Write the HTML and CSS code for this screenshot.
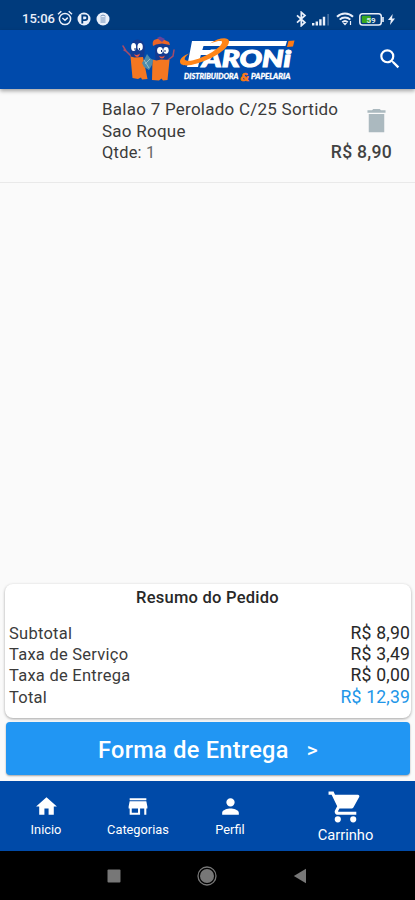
FILE: index.html
```html
<!DOCTYPE html>
<html lang="pt-BR">
<head>
<meta charset="utf-8">
<meta name="viewport" content="width=device-width, initial-scale=1">
<title>Faroni - Carrinho</title>
<link rel="stylesheet" href="styles.css">
</head>
<body>
<div class="app">
  <div class="status">
    <span class="clock">15:06</span>
    <svg class="alarm" width="16" height="16" viewBox="0 0 16 16" fill="none" stroke="currentColor" stroke-width="1.5"><circle cx="8" cy="9" r="5.6"/><path d="M1 4.2 4.3 1.3M15 4.2 11.7 1.3M5.4 8 8 10.2 10.8 7.6"/></svg>
    <svg class="badge-p" width="14" height="14" viewBox="0 0 14 14"><circle cx="7" cy="7" r="6.5" fill="currentColor"/><path d="M5.3 11.5V3.5H8a2.2 2.2 0 0 1 0 4.6H5.3" fill="none" stroke="#003b7d" stroke-width="1.8"/></svg>
    <svg class="badge-s" width="14" height="14" viewBox="0 0 14 14"><circle cx="7" cy="7" r="6.5" fill="currentColor"/><path d="M4.5 4.2 7 3l2.5 1.2M4.5 6h5M4.5 8h5M4.5 10h5" fill="none" stroke="#7291b8" stroke-width="1"/></svg>
    <span class="grow"></span>
    <svg width="11" height="16" viewBox="0 0 11 16" fill="none" stroke="currentColor" stroke-width="1.7"><path d="M1 4.3 9 11.5 5.3 14.7V1.3L9 4.5 1 11.7"/></svg>
    <svg class="signal" width="18" height="13" viewBox="0 0 18 13" fill="currentColor"><path d="M0 10h2.4v2.5H0zM3.6 8.500H6v4H3.600zM7.200 6.300h2.400v6.200H7.200zM10.800 3.800h2.400v8.700h-2.400z"/><path d="M15.400 1h1.400v11.500h-1.400z" opacity=".35"/></svg>
    <svg class="wifi" width="18" height="14" viewBox="0 0 18 14" fill="none" stroke="currentColor" stroke-width="2"><path d="M1 4.800a11.500 11.500 0 0 1 16 0M3.700 7.600a7.600 7.600 0 0 1 10.600 0M6.300 10.200a4 4 0 0 1 5.400 0"/><path d="m6.800 11 2.200 2.400L11.200 11z" fill="currentColor" stroke="none"/><path d="M14.500 9v4" stroke-width="1.200"/></svg>
    <svg class="battery" width="25" height="13" viewBox="0 0 25 13"><rect x=".8" y=".8" width="21.500" height="11.200" rx="2.800" fill="none" stroke="currentColor" stroke-width="1.500"/><rect x="2.800" y="2.800" width="9" height="7.300" rx="1" fill="#38a920"/><path d="M23.200 4h1.600v5h-1.600z" fill="currentColor"/><text class="level" x="7.500" y="9.500">59</text></svg>
    <svg class="bolt" width="7" height="11" viewBox="0 0 7 11" fill="currentColor"><path d="M4.700 0 0 6h2.800L2 11l5-6.500H4z"/></svg>
  </div>

  <header class="header">
    <svg class="logo" width="176" height="50" viewBox="121 35 176 50">
      <g fill="none" stroke="#a54c68" stroke-width="1.500" stroke-linecap="round"><path d="M132 57 126 51 123 46M126 51l-2-1M168 60l5-4 1-6"/></g>
      <path d="M130.500 48q1-8 6.500-8.500t8 7l-1 11-4 3h-9z" fill="#143b91"/>
      <path d="M155 48q1-8 7-8t7.500 7l-1 11-4 3h-9z" fill="#143b91"/>
      <path d="m130.500 56.500 4 1 8.500-.5 4.500 22-5.500.5-1-2-3 1.500-5.500-1z" fill="#f47721"/>
      <path d="m152.500 59.500 4 1 4.500-1 8.500.5-2 20-4.500.5-1.500-2-2.500 2-7-.5z" fill="#f47721"/>
      <g fill="#fff"><ellipse cx="133.600" cy="47" rx="2.500" ry="4"/><ellipse cx="140.100" cy="46.700" rx="2.700" ry="3.800"/><ellipse cx="160" cy="50.500" rx="2.900" ry="3.600"/><ellipse cx="166" cy="50.300" rx="2.700" ry="3.400"/></g>
      <path d="M135 48v2M139.400 48v2M161.500 50v2M165 50v2" stroke="#142f70"/>
      <path d="M134 54q3 2 6-.5-1 3.500-3 3.500t-3-3M159 56q4 1.500 6-.5-1 3-3 3t-3-2.500" fill="#e95645"/>
      <path d="M153 46q-1-4 1-6l6-2 9 4 1 3-8-1.500-6 1z" fill="#ed6425"/>
      <path d="m157 38 3-1.500 5 2.500-3 3z" fill="#67449a"/>
      <path d="m144 60 3-6 3 4 3 2-1 5-3 5-5-3-2-4z" fill="#4d8cad"/>
      <path d="m144 60 5 8M150 59l-5 5" stroke="#9bbdc5"/>
      <path d="M192 41h95l-1.500 5h-82l-1.200 4h10l-1.500 5h-10L198 67H187z" fill="#fff"/>
      <text class="brand" x="202" y="67" textLength="89" lengthAdjust="spacingAndGlyphs">ARONi</text>
      <path d="m293.500 41 6-.5-1.500 6-6 .5z" transform="translate(-5)" fill="#ff7a13"/>
      <path d="M210 43.500c8-5.500 18-7 19-2.500 1 7-16 18-32 22.500-10 3-17 2.500-17-2 0-3 4-6.500 9-8-5 4-6 7-1 7.300 10 .7 35-13 34-19-.5-2.500-6-.5-12 1.700z" fill="#ff8518"/>
      <text class="tagline" x="184" y="79.300" textLength="54.500" lengthAdjust="spacingAndGlyphs">DISTRIBUIDORA</text>
      <text class="ampersand" x="240.500" y="81" textLength="8.500" lengthAdjust="spacingAndGlyphs">&amp;</text>
      <text class="tagline" x="251" y="79.300" textLength="39.500" lengthAdjust="spacingAndGlyphs">PAPELARIA</text>
    </svg>
    <svg class="search" width="26" height="26" viewBox="0 0 24 24" fill="currentColor"><path d="M15.500 14h-.79l-.28-.27A6.471 6.471 0 0 0 16 9.500 6.500 6.500 0 1 0 9.500 16c1.610 0 3.090-.59 4.230-1.570l.27.28v.79l5 4.990L20.490 19zm-6 0a4.500 4.500 0 1 1 0-9 4.500 4.500 0 0 1 0 9"/></svg>
  </header>

  <main class="content">
    <article class="item">
      <div class="item-top">
        <div class="name">Balao 7 Perolado C/25 Sortido<br>Sao Roque</div>
        <svg class="trash" width="31" height="31" viewBox="0 0 24 24" fill="currentColor"><path d="M6 21h12V7H6zM19 4h-3.500l-1-1h-5l-1 1H5v2h14z"/></svg>
      </div>
      <div class="item-bottom"><span>Qtde: <span class="qty">1</span></span><strong class="price">R$ 8,90</strong></div>
    </article>
  </main>

  <section class="summary">
    <h2 class="title">Resumo do Pedido</h2>
    <div class="row"><span>Subtotal</span><span class="amount">R$ 8,90</span></div>
    <div class="row"><span>Taxa de Serviço</span><span class="amount">R$ 3,49</span></div>
    <div class="row"><span>Taxa de Entrega</span><span class="amount">R$ 0,00</span></div>
    <div class="row"><span>Total</span><span class="amount total">R$ 12,39</span></div>
  </section>
  <button class="checkout"><span>Forma de Entrega</span><span class="arrow">&gt;</span></button>

  <nav class="tabs">
    <div class="tab"><svg width="25" height="25" viewBox="0 0 24 24" fill="currentColor"><path d="M10 20v-6h4v6h5v-8h3L12 3 2 12h3v8z"/></svg><span>Inicio</span></div>
    <div class="tab"><svg width="26" height="25" viewBox="0 0 24 24" fill="currentColor"><path d="M20 4H4v2h16zm1 10v-2l-1-5H4l-1 5v2h1v6h10v-6h4v6h2v-6zm-9 4H6v-4h6z"/></svg><span>Categorias</span></div>
    <div class="tab"><svg width="27" height="26" viewBox="0 0 24 24" fill="currentColor"><path d="M12 12a4 4 0 1 0 0-8 4 4 0 0 0 0 8m0 2c-2.670 0-8 1.340-8 4v2h16v-2c0-2.660-5.330-4-8-4"/></svg><span>Perfil</span></div>
    <div class="tab active"><svg width="37" height="38" viewBox="0 0 24 24" fill="currentColor"><path d="M7 18a2 2 0 1 0 0 4 2 2 0 0 0 0-4M1 2v2h2l3.600 7.590-1.350 2.450C4.520 15.370 5.480 17 7 17h12v-2H7.420c-.14 0-.25-.11-.25-.25l.03-.12.900-1.630h7.450c.75 0 1.410-.41 1.750-1.030l3.580-6.490A1 1 0 0 0 20 4H5.210l-.94-2zm16 16a2 2 0 1 0 0 4 2 2 0 0 0 0-4"/></svg><span>Carrinho</span></div>
  </nav>

  <div class="system">
    <svg width="14" height="14" viewBox="0 0 14 14"><rect x=".5" y=".5" width="13" height="13" rx="1" fill="currentColor"/></svg>
    <svg width="20" height="20" viewBox="0 0 20 20"><circle cx="10" cy="10" r="9" fill="none" stroke="currentColor" stroke-width="1.300"/><circle cx="10" cy="10" r="7" fill="currentColor"/></svg>
    <svg width="14" height="16" viewBox="0 0 14 16"><path d="M13 .8v14.400L.8 8z" fill="currentColor"/></svg>
  </div>
</div>
</body>
</html>
```
FILE: styles.css
```css
* { box-sizing: border-box; }
body { margin: 0; font-family: Roboto, sans-serif; background: #fafafa; }
svg { display: block; flex: none; }
.app { width: 415px; height: 900px; display: flex; flex-direction: column; overflow: hidden; }

.status { height: 30px; flex: none; background: #003b7d; color: #e9effa; display: flex; align-items: center; padding: 8px 20px 0 22px; }
.clock { font-size: 13px; font-weight: 500; width: 34px; white-space: nowrap; line-height: 16px; }
.alarm { margin-left: 1px; margin-top: -2px; }
.badge-p { margin-left: 4px; }
.badge-s { margin-left: 5px; }
.grow { flex: 1; }
.signal { margin-left: 5px; }
.wifi { margin-left: 6px; }
.battery { margin-left: 5px; }
.bolt { margin-left: 4px; }
.level { font-size: 8px; font-weight: 700; fill: #dce9ea; }

.header { height: 59px; flex: none; background: #004aab; color: #fff; display: flex; align-items: flex-start; justify-content: space-between; padding: 5px 12px 0 121px; box-shadow: 0 2px 4px rgba(0, 0, 0, .35); z-index: 1; }
.search { margin-top: 11px; }
.brand { font: italic 900 23px Lato, sans-serif; fill: #fff; stroke: #fff; stroke-width: 1; }
.tagline { font: italic 900 8px Lato, sans-serif; fill: #fff; stroke: #fff; stroke-width: .3; }
.ampersand { font: italic 900 12px Lato, sans-serif; fill: #ff7a13; stroke: #ff7a13; stroke-width: .6; }

.content { flex: 1; min-height: 0; }
.item { height: 94px; border-bottom: 1px solid #e9e9e9; padding: 10px 23px 0 102px; color: #3b3b3b; font-size: 17px; line-height: 21.5px; letter-spacing: .25px; }
.item-top { display: flex; justify-content: space-between; }
.name { white-space: nowrap; }
.trash { color: #abb9bf; margin-top: 6px; }
.item-bottom { display: flex; justify-content: space-between; font-size: 16.4px; }
.qty { color: #666; }
.price { font-size: 17.6px; font-weight: 500; color: #424242; }

.summary { height: 134px; flex: none; margin: 0 4px 0 5px; background: #fff; border-radius: 8px; box-shadow: 0 1px 3px rgba(0, 0, 0, .35); padding: 3px 1px 0 4px; color: #3b3b3b; font-size: 16.5px; line-height: 21.2px; letter-spacing: .25px; }
.title { margin: 0 0 15px; padding-right: 4px; font-size: 16.5px; font-weight: 500; line-height: 21px; color: #282828; text-align: center; }
.row { height: 21.2px; display: flex; justify-content: space-between; }
.amount { color: #282828; font-size: 17.6px; letter-spacing: .2px; margin-right: -.2px; }
.total { color: #2196e8; }

.checkout { height: 53px; flex: none; margin: 4px 5px 6px 6px; padding: 2px 0 0; border: 0; border-radius: 4px; background: #2196f3; box-shadow: 0 1px 2px rgba(0, 0, 0, .35); color: #fff; font: 500 23.5px Roboto, sans-serif; display: flex; align-items: center; justify-content: center; gap: 18px; letter-spacing: .3px; }
.arrow { font-size: 21px; }

.tabs { height: 70px; flex: none; background: #004aa8; color: #fff; display: grid; grid-template-columns: 92px 92px 92px 139px; }
.tab { display: flex; flex-direction: column; align-items: center; padding-top: 13px; font-size: 12.8px; line-height: 16px; }
.tab svg { height: 25px; }
.tab span { margin-top: 3px; }
.tab.active { padding-top: 7px; font-size: 14.7px; line-height: 18px; }
.tab.active svg { height: 38px; }
.tab.active span { margin-top: 0; }

.system { height: 49px; flex: none; background: #000; color: #777; display: flex; align-items: center; padding-left: 107px; gap: 76px; }
```
